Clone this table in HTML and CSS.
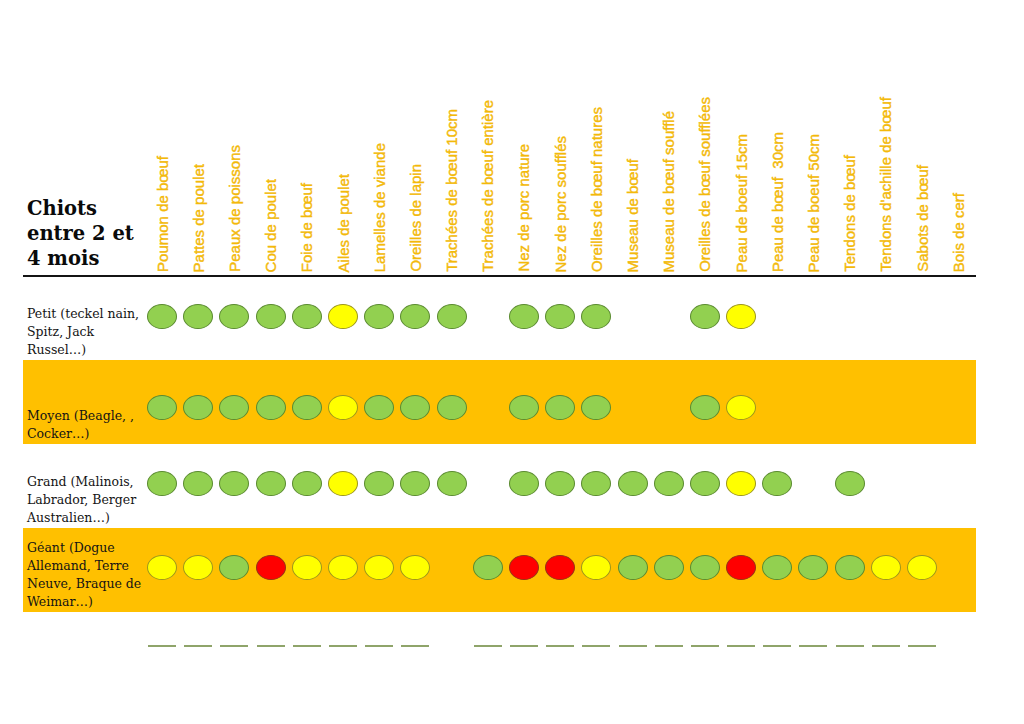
FILE: index.html
```html
<!DOCTYPE html>
<html lang="fr">
<head>
<meta charset="utf-8">
<title>Chiots entre 2 et 4 mois</title>
<link rel="stylesheet" href="styles.css">
</head>
<body>
<div class="sheet">
  <div class="grid head">
    <div class="title">Chiots<br>entre 2 et<br>4 mois</div>
    <div class="col"><span class="lbl">Poumon de bœuf</span></div>
    <div class="col"><span class="lbl">Pattes de poulet</span></div>
    <div class="col"><span class="lbl">Peaux de poissons</span></div>
    <div class="col"><span class="lbl">Cou de poulet</span></div>
    <div class="col"><span class="lbl">Foie de bœuf</span></div>
    <div class="col"><span class="lbl">Ailes de poulet</span></div>
    <div class="col"><span class="lbl">Lamelles de viande</span></div>
    <div class="col"><span class="lbl">Oreilles de lapin</span></div>
    <div class="col"><span class="lbl">Trachées de bœuf 10cm</span></div>
    <div class="col"><span class="lbl">Trachées de bœuf entière</span></div>
    <div class="col"><span class="lbl">Nez de porc nature</span></div>
    <div class="col"><span class="lbl">Nez de porc soufflés</span></div>
    <div class="col"><span class="lbl">Oreilles de bœuf natures</span></div>
    <div class="col"><span class="lbl">Museau de bœuf</span></div>
    <div class="col"><span class="lbl">Museau de bœuf soufflé</span></div>
    <div class="col"><span class="lbl">Oreilles de bœuf soufflées</span></div>
    <div class="col"><span class="lbl">Peau de boeuf 15cm</span></div>
    <div class="col"><span class="lbl">Peau de bœuf&nbsp; 30cm</span></div>
    <div class="col"><span class="lbl">Peau de boeuf 50cm</span></div>
    <div class="col"><span class="lbl">Tendons de bœuf</span></div>
    <div class="col"><span class="lbl">Tendons d'achille de bœuf</span></div>
    <div class="col"><span class="lbl">Sabots de bœuf</span></div>
    <div class="col"><span class="lbl">Bois de cerf</span></div>
  </div>

  <div class="grid row row--first">
    <div class="name">Petit (teckel nain,<br>Spitz, Jack<br>Russel…)</div>
    <div class="cell"><span class="dot dot--g"></span></div>
    <div class="cell"><span class="dot dot--g"></span></div>
    <div class="cell"><span class="dot dot--g"></span></div>
    <div class="cell"><span class="dot dot--g"></span></div>
    <div class="cell"><span class="dot dot--g"></span></div>
    <div class="cell"><span class="dot dot--y"></span></div>
    <div class="cell"><span class="dot dot--g"></span></div>
    <div class="cell"><span class="dot dot--g"></span></div>
    <div class="cell"><span class="dot dot--g"></span></div>
    <div class="cell"></div>
    <div class="cell"><span class="dot dot--g"></span></div>
    <div class="cell"><span class="dot dot--g"></span></div>
    <div class="cell"><span class="dot dot--g"></span></div>
    <div class="cell"></div>
    <div class="cell"></div>
    <div class="cell"><span class="dot dot--g"></span></div>
    <div class="cell"><span class="dot dot--y"></span></div>
    <div class="cell"></div>
    <div class="cell"></div>
    <div class="cell"></div>
    <div class="cell"></div>
    <div class="cell"></div>
    <div class="cell"></div>
  </div>

  <div class="grid row row--band row--low">
    <div class="name">Moyen (Beagle, ,<br>Cocker…)</div>
    <div class="cell"><span class="dot dot--g"></span></div>
    <div class="cell"><span class="dot dot--g"></span></div>
    <div class="cell"><span class="dot dot--g"></span></div>
    <div class="cell"><span class="dot dot--g"></span></div>
    <div class="cell"><span class="dot dot--g"></span></div>
    <div class="cell"><span class="dot dot--y"></span></div>
    <div class="cell"><span class="dot dot--g"></span></div>
    <div class="cell"><span class="dot dot--g"></span></div>
    <div class="cell"><span class="dot dot--g"></span></div>
    <div class="cell"></div>
    <div class="cell"><span class="dot dot--g"></span></div>
    <div class="cell"><span class="dot dot--g"></span></div>
    <div class="cell"><span class="dot dot--g"></span></div>
    <div class="cell"></div>
    <div class="cell"></div>
    <div class="cell"><span class="dot dot--g"></span></div>
    <div class="cell"><span class="dot dot--y"></span></div>
    <div class="cell"></div>
    <div class="cell"></div>
    <div class="cell"></div>
    <div class="cell"></div>
    <div class="cell"></div>
    <div class="cell"></div>
  </div>

  <div class="grid row">
    <div class="name">Grand (Malinois,<br>Labrador, Berger<br>Australien…)</div>
    <div class="cell"><span class="dot dot--g"></span></div>
    <div class="cell"><span class="dot dot--g"></span></div>
    <div class="cell"><span class="dot dot--g"></span></div>
    <div class="cell"><span class="dot dot--g"></span></div>
    <div class="cell"><span class="dot dot--g"></span></div>
    <div class="cell"><span class="dot dot--y"></span></div>
    <div class="cell"><span class="dot dot--g"></span></div>
    <div class="cell"><span class="dot dot--g"></span></div>
    <div class="cell"><span class="dot dot--g"></span></div>
    <div class="cell"></div>
    <div class="cell"><span class="dot dot--g"></span></div>
    <div class="cell"><span class="dot dot--g"></span></div>
    <div class="cell"><span class="dot dot--g"></span></div>
    <div class="cell"><span class="dot dot--g"></span></div>
    <div class="cell"><span class="dot dot--g"></span></div>
    <div class="cell"><span class="dot dot--g"></span></div>
    <div class="cell"><span class="dot dot--y"></span></div>
    <div class="cell"><span class="dot dot--g"></span></div>
    <div class="cell"></div>
    <div class="cell"><span class="dot dot--g"></span></div>
    <div class="cell"></div>
    <div class="cell"></div>
    <div class="cell"></div>
  </div>

  <div class="grid row row--band">
    <div class="name">Géant (Dogue<br>Allemand, Terre<br>Neuve, Braque de<br>Weimar…)</div>
    <div class="cell"><span class="dot dot--y"></span></div>
    <div class="cell"><span class="dot dot--y"></span></div>
    <div class="cell"><span class="dot dot--g"></span></div>
    <div class="cell"><span class="dot dot--r"></span></div>
    <div class="cell"><span class="dot dot--y"></span></div>
    <div class="cell"><span class="dot dot--y"></span></div>
    <div class="cell"><span class="dot dot--y"></span></div>
    <div class="cell"><span class="dot dot--y"></span></div>
    <div class="cell"></div>
    <div class="cell"><span class="dot dot--g"></span></div>
    <div class="cell"><span class="dot dot--r"></span></div>
    <div class="cell"><span class="dot dot--r"></span></div>
    <div class="cell"><span class="dot dot--y"></span></div>
    <div class="cell"><span class="dot dot--g"></span></div>
    <div class="cell"><span class="dot dot--g"></span></div>
    <div class="cell"><span class="dot dot--g"></span></div>
    <div class="cell"><span class="dot dot--r"></span></div>
    <div class="cell"><span class="dot dot--g"></span></div>
    <div class="cell"><span class="dot dot--g"></span></div>
    <div class="cell"><span class="dot dot--g"></span></div>
    <div class="cell"><span class="dot dot--y"></span></div>
    <div class="cell"><span class="dot dot--y"></span></div>
    <div class="cell"></div>
  </div>

  <div class="grid dashes">
    <div></div>
    <div class="dcell"><span class="dash"></span></div>
    <div class="dcell"><span class="dash"></span></div>
    <div class="dcell"><span class="dash"></span></div>
    <div class="dcell"><span class="dash"></span></div>
    <div class="dcell"><span class="dash"></span></div>
    <div class="dcell"><span class="dash"></span></div>
    <div class="dcell"><span class="dash"></span></div>
    <div class="dcell"><span class="dash"></span></div>
    <div class="dcell"></div>
    <div class="dcell"><span class="dash"></span></div>
    <div class="dcell"><span class="dash"></span></div>
    <div class="dcell"><span class="dash"></span></div>
    <div class="dcell"><span class="dash"></span></div>
    <div class="dcell"><span class="dash"></span></div>
    <div class="dcell"><span class="dash"></span></div>
    <div class="dcell"><span class="dash"></span></div>
    <div class="dcell"><span class="dash"></span></div>
    <div class="dcell"><span class="dash"></span></div>
    <div class="dcell"><span class="dash"></span></div>
    <div class="dcell"><span class="dash"></span></div>
    <div class="dcell"><span class="dash"></span></div>
    <div class="dcell"><span class="dash"></span></div>
    <div class="dcell"></div>
  </div>
</div>
</body>
</html>
```

FILE: styles.css
```css
html, body {
  margin: 0;
  padding: 0;
  background: #ffffff;
}

body {
  width: 1024px;
  height: 724px;
  overflow: hidden;
  font-family: "DejaVu Serif", "Liberation Serif", serif;
  color: #111111;
}

.sheet {
  width: 953px;
  margin-left: 23px;
}

.grid {
  display: grid;
  grid-template-columns: 121px repeat(23, 36.2px);
}

/* header */
.head {
  height: 275px;
  border-bottom: 2px solid #141414;
  align-items: end;
}

.title {
  padding: 0 0 4px 4px;
  font-family: "DejaVu Serif", "Liberation Serif", serif;
  font-weight: bold;
  font-size: 19.5px;
  line-height: 25px;
  color: #0a0a0a;
  white-space: nowrap;
}

.col {
  display: flex;
  justify-content: center;
  align-items: flex-end;
  padding-bottom: 3px;
}

.lbl {
  writing-mode: vertical-rl;
  transform: rotate(180deg);
  font-family: "Liberation Sans", Arial, sans-serif;
  font-size: 15px;
  line-height: 17px;
  color: #f3b90a;
  -webkit-text-stroke: 0.4px #f3b90a;
  white-space: nowrap;
}

/* body rows */
.row {
  height: 84px;
}

.row--first {
  height: 83px;
}

.row--band {
  background: #ffc000;
}

.name {
  align-self: end;
  padding: 0 0 1px 4px;
  font-size: 12.5px;
  line-height: 18px;
  white-space: nowrap;
  color: #141414;
}

.cell {
  display: flex;
  justify-content: center;
  align-items: flex-start;
  padding-top: 27px;
}

.row--low .cell {
  padding-top: 35px;
}

.dot {
  box-sizing: border-box;
  width: 30px;
  height: 25px;
  border-radius: 50%;
  border: 1.6px solid #5a8a30;
  background: #92d050;
}

.dot--y {
  background: #ffff00;
  border-color: #9c961c;
}

.dot--r {
  background: #ff0000;
  border-color: #963316;
}

/* dashes */
.dashes {
  margin-top: 33px;
  height: 2px;
}

.dcell {
  display: flex;
  justify-content: center;
}

.dash {
  width: 28px;
  height: 2px;
  background: #8fa46a;
}
```
